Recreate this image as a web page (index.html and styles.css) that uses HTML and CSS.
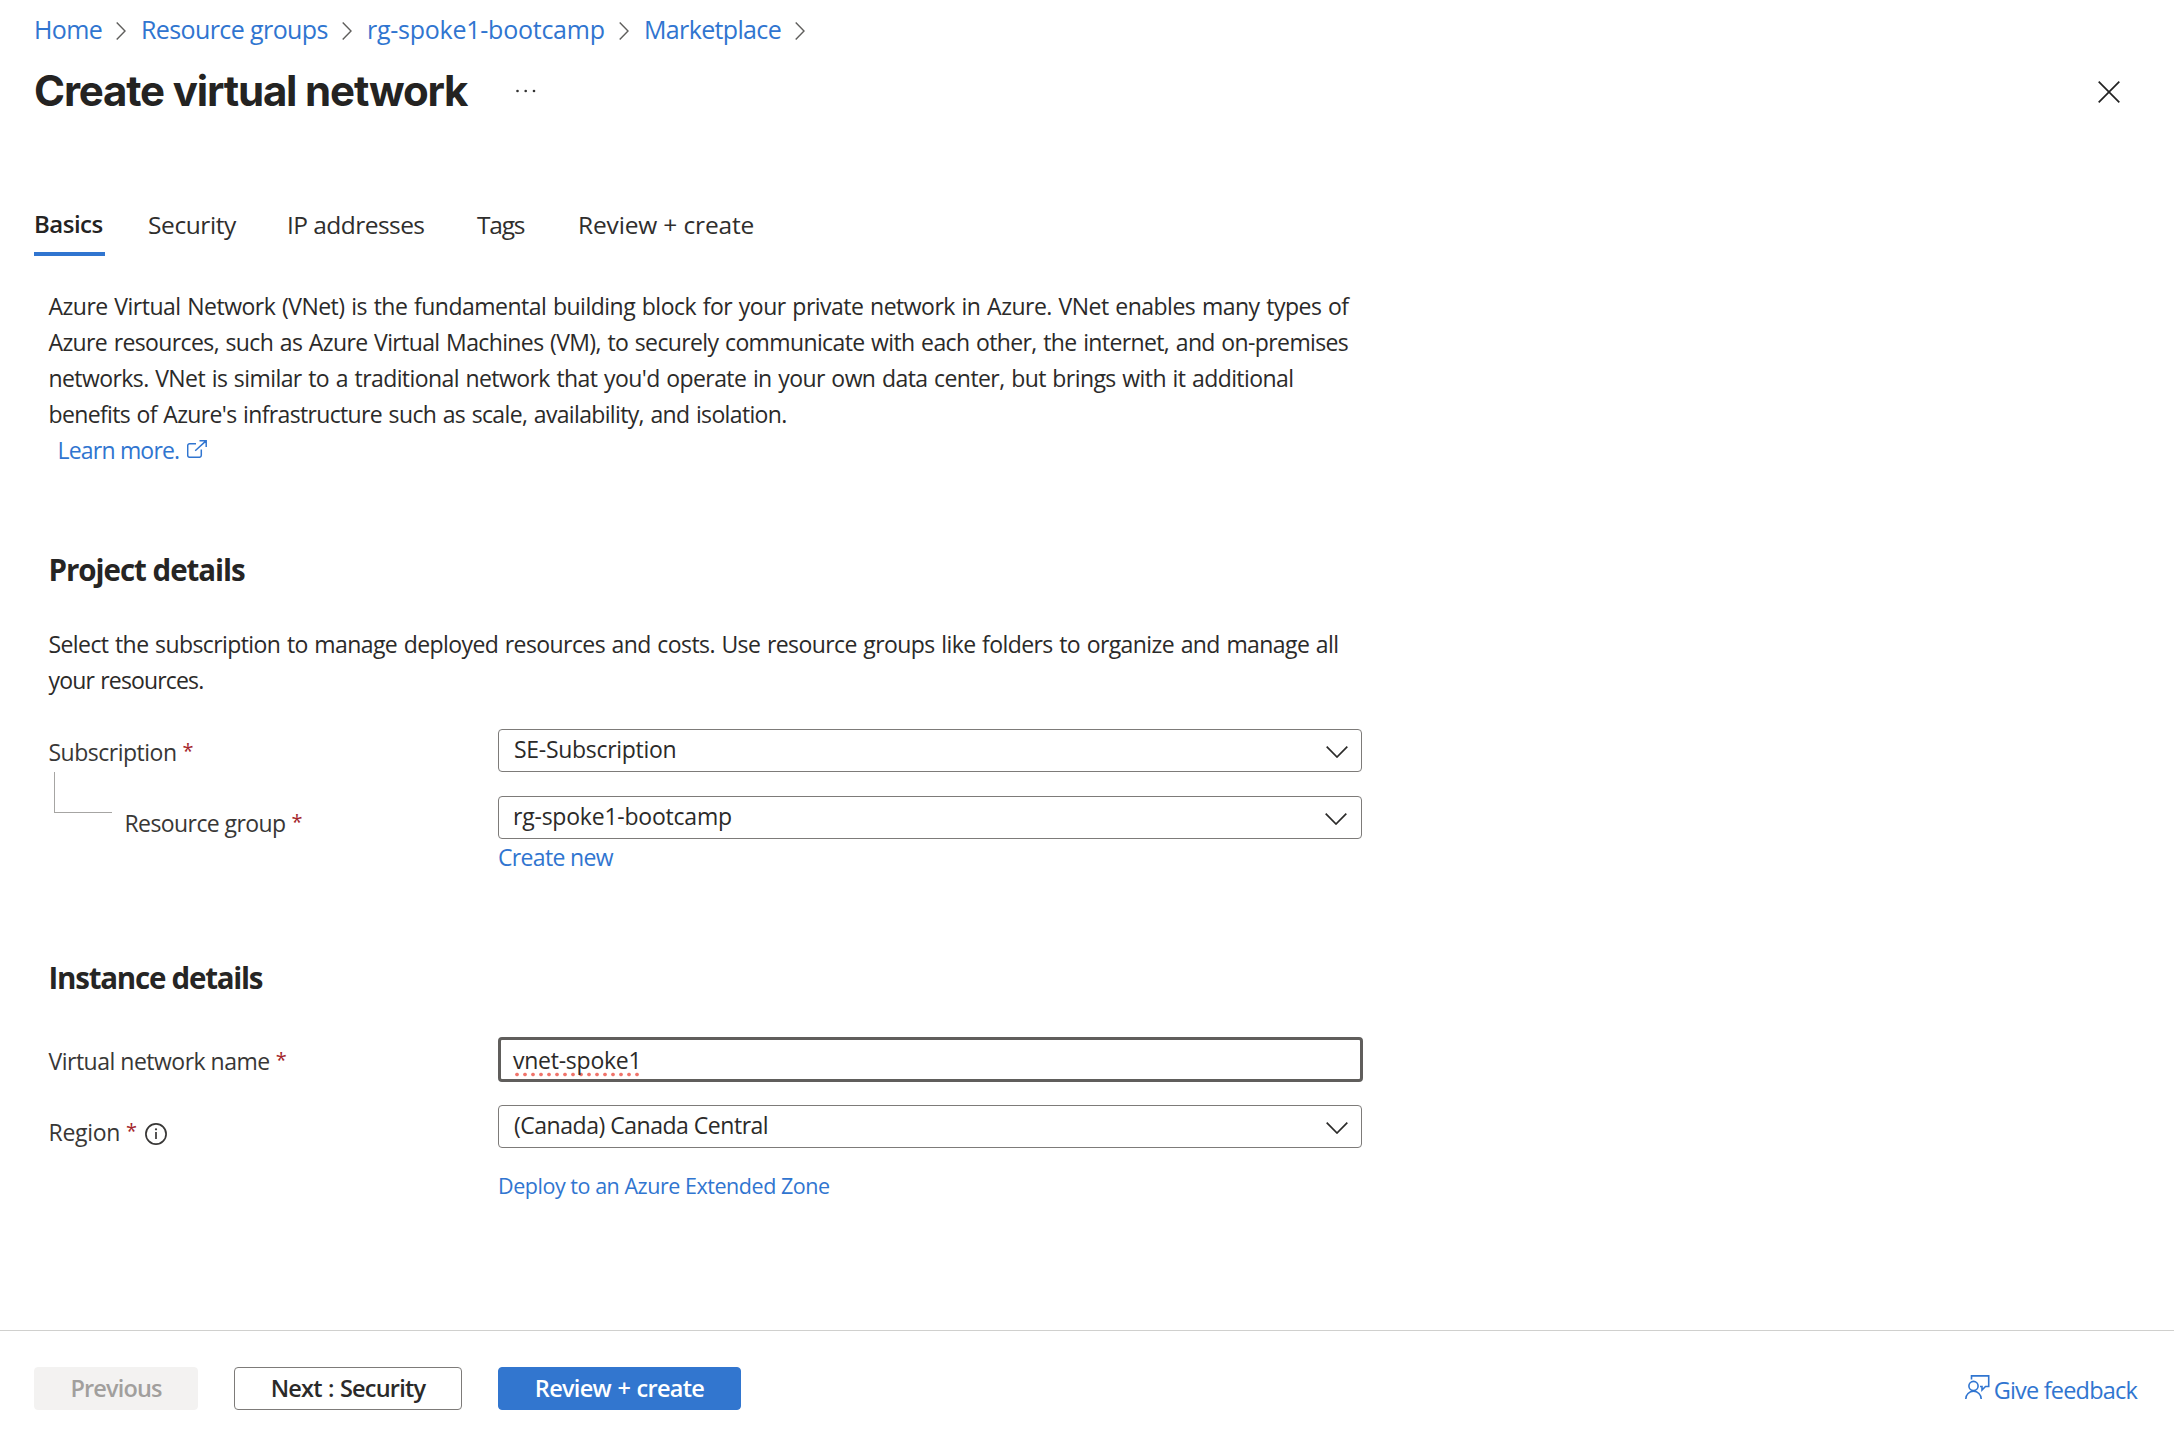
FILE: index.html
```html
<!DOCTYPE html>
<html lang="en">
<head>
<meta charset="utf-8">
<title>Create virtual network</title>
<link rel="stylesheet" href="styles.css">
</head>
<body>
<header class="header">
  <nav class="breadcrumb">
    <a class="crumb crumb-home" href="#">Home</a>
    <svg class="sep" viewBox="0 0 10 18"><path d="M.7.5 9 9 .7 17.500"/></svg>
    <a class="crumb crumb-groups" href="#">Resource groups</a>
    <svg class="sep" viewBox="0 0 10 18"><path d="M.7.5 9 9 .7 17.500"/></svg>
    <a class="crumb crumb-rg" href="#">rg-spoke1-bootcamp</a>
    <svg class="sep" viewBox="0 0 10 18"><path d="M.7.5 9 9 .7 17.500"/></svg>
    <a class="crumb crumb-market" href="#">Marketplace</a>
    <svg class="sep" viewBox="0 0 10 18"><path d="M.7.5 9 9 .7 17.500"/></svg>
  </nav>
  <div class="title-row">
    <h1 class="title">Create virtual network</h1>
    <svg class="more" viewBox="0 0 20 4"><circle cx="1.500" cy="2" r="1.300"/><circle cx="9.700" cy="2" r="1.300"/><circle cx="18" cy="2" r="1.300"/></svg>
    <svg class="close" viewBox="0 0 22 22"><path d="M.7.700 21.300 21.300M21.300.7.7 21.300"/></svg>
  </div>
</header>

<nav class="tabs">
  <a class="tab tab-active" href="#">Basics</a>
  <a class="tab tab-security" href="#">Security</a>
  <a class="tab tab-ip" href="#">IP addresses</a>
  <a class="tab tab-tags" href="#">Tags</a>
  <a class="tab tab-review" href="#">Review + create</a>
</nav>

<main class="content">
  <p class="text">
    <span class="line line-1">Azure Virtual Network (VNet) is the fundamental building block for your private network in Azure. VNet enables many types of</span>
    <span class="line line-2">Azure resources, such as Azure Virtual Machines (VM), to securely communicate with each other, the internet, and on-premises</span>
    <span class="line line-3">networks. VNet is similar to a traditional network that you'd operate in your own data center, but brings with it additional</span>
    <span class="line line-4">benefits of Azure's infrastructure such as scale, availability, and isolation.</span>
  </p>
  <a class="learn" href="#">Learn more.
    <svg class="external" viewBox="0 0 20 18"><path d="M9 3.700H2.700a2 2 0 0 0-2 2v9.600a2 2 0 0 0 2 2h9.600a2 2 0 0 0 2-2V9.500M8.200 10.700 19 .9M12.500.700H19.200V7"/></svg>
  </a>

  <h2 class="heading heading-project">Project details</h2>
  <p class="text text-project">
    <span class="line line-5">Select the subscription to manage deployed resources and costs. Use resource groups like folders to organize and manage all</span>
    <span class="line line-6">your resources.</span>
  </p>

  <div class="row row-sub">
    <div class="label"><span class="label-sub">Subscription</span><span class="star">*</span></div>
    <div class="select"><span class="value-sub">SE-Subscription</span><svg class="chevron" viewBox="0 0 22 12"><path d="M.7.7 11 11 21.300.7"/></svg></div>
  </div>
  <div class="row row-rg">
    <div class="label"><span class="tree"></span><span class="label-rg">Resource group</span><span class="star">*</span></div>
    <div class="select select-rg"><span class="value-rg">rg-spoke1-bootcamp</span><svg class="chevron" viewBox="0 0 22 12"><path d="M.7.7 11 11 21.300.7"/></svg></div>
  </div>
  <a class="below create-new" href="#">Create new</a>

  <h2 class="heading heading-instance">Instance details</h2>
  <div class="row row-name">
    <div class="label"><span class="label-name">Virtual network name</span><span class="star">*</span></div>
    <div class="input"><span class="value-name">vnet-spoke1</span></div>
  </div>
  <div class="row row-region">
    <div class="label"><span class="label-region">Region</span><span class="star">*</span>
      <svg class="info" viewBox="0 0 22 22"><circle cx="11" cy="11" r="10.100"/><path d="M11 9v7"/><circle class="dot" cx="11" cy="6.300" r="1.100"/></svg>
    </div>
    <div class="select"><span class="value-region">(Canada) Canada Central</span><svg class="chevron" viewBox="0 0 22 12"><path d="M.7.7 11 11 21.300.7"/></svg></div>
  </div>
  <a class="below deploy" href="#">Deploy to an Azure Extended Zone</a>
</main>

<footer class="footer">
  <button class="btn btn-prev">Previous</button>
  <button class="btn btn-next">Next : Security</button>
  <button class="btn btn-review">Review + create</button>
  <a class="feedback" href="#">
    <svg class="person" viewBox="0 0 25 25"><circle cx="8.500" cy="11" r="4.600"/><path d="M.8 24a7.700 7.700 0 0 1 15.400 0M6.500 4.500V.9H23.700V11.500H20.500L17 15V11.500H15"/></svg>
    <span>Give feedback</span>
  </a>
</footer>
</body>
</html>
```
FILE: styles.css
```css
* { box-sizing: border-box; }
body {
  margin: 0;
  height: 1430px;
  display: flex;
  flex-direction: column;
  overflow: hidden;
  background: #fff;
  color: #2b2a29;
  font: 400 23px/36px "Open Sans", "Noto Sans", sans-serif;
}
a { color: #3075d0; text-decoration: none; }
p, h1, h2 { margin: 0; }
svg { fill: none; stroke: currentColor; flex: none; }

.header { padding: 11px 54px 0 34px; }
.breadcrumb { display: flex; align-items: center; height: 36px; font-size: 25px; }
.crumb { white-space: nowrap; }
.crumb-home { width: 69px; letter-spacing: -.6px; }
.crumb-groups { width: 188px; letter-spacing: -.6px; }
.crumb-rg { width: 239px; letter-spacing: -.25px; }
.crumb-market { width: 138px; letter-spacing: -.65px; }
.sep { width: 10px; height: 18px; margin: 4px 15px 0 13px; color: #5f5e5c; stroke-width: 1.400; }
.title-row { display: flex; align-items: center; height: 56px; margin-top: 16px; }
.title {
  width: 482px;
  color: #242322;
  font: 650 42px/56px Inter, sans-serif;
  letter-spacing: -1.170px;
  white-space: nowrap;
}
.more { width: 20px; height: 4px; fill: #333; stroke: none; }
.close { width: 22px; height: 22px; margin: 1px 0 0 auto; color: #222; stroke-width: 1.700; }

.tabs { display: flex; height: 50px; margin-top: 87px; padding-left: 34px; font-size: 24.500px; }
.tab { color: #2f2e2d; line-height: 37px; white-space: nowrap; }
.tab-active {
  width: 71px;
  border-bottom: 4px solid #3075d0;
  color: #242322;
  font-size: 24px;
  font-weight: 600;
  line-height: 35px;
  letter-spacing: -.5px;
}
.tab-security { width: 89px; margin-left: 43px; letter-spacing: -.4px; }
.tab-ip { width: 139px; margin-left: 50px; letter-spacing: -.55px; }
.tab-tags { width: 47px; margin-left: 51px; letter-spacing: -1.200px; }
.tab-review { margin-left: 54px; letter-spacing: -.15px; }

.content { display: flex; flex-direction: column; flex: 1; padding: 32px 0 0 48.500px; }
.line { display: block; white-space: nowrap; word-spacing: 1.200px; }
.line-1 { letter-spacing: -.51px; }
.line-2 { letter-spacing: -.62px; }
.line-3 { letter-spacing: -.58px; }
.line-4 { letter-spacing: -.65px; }
.line-5 { letter-spacing: -.59px; }
.line-6 { letter-spacing: -.85px; }
.learn { display: flex; gap: 8px; margin-left: 9px; letter-spacing: -.8px; }
.external { width: 20px; height: 18px; margin-top: 8px; stroke-width: 1.500; }

.heading { color: #262524; font-size: 29.500px; font-weight: 680; line-height: 40px; }
.heading-project { margin-top: 82px; letter-spacing: -1.030px; }
.heading-instance { margin-top: 82px; letter-spacing: -1.230px; }
.text-project { margin-top: 36px; }

.row { display: flex; align-items: flex-start; height: 43px; }
.row-sub { margin-top: 31px; }
.row-rg { margin-top: 24px; }
.row-name { height: 45px; margin-top: 40px; }
.row-region { margin-top: 23px; }
.label { display: flex; width: 449.500px; padding-top: 5px; color: #383736; white-space: nowrap; }
.row-rg .label, .row-region .label { padding-top: 9px; }
.row-name .label { padding-top: 6px; }
.label-sub { letter-spacing: -.5px; }
.label-rg { margin-left: 13px; letter-spacing: -.58px; }
.label-name { letter-spacing: -.5px; }
.label-region { letter-spacing: -.3px; }
.star { margin-left: 6px; color: #a4262c; font-size: 20px; line-height: 34px; }
.tree { flex: none; width: 58px; height: 41px; margin: -33px 0 0 5px; border: solid #a6a5a3; border-width: 0 0 1px 1px; }
.info { width: 22px; height: 22px; margin: 9px 0 0 8px; stroke-width: 1.700; }
.dot { fill: currentColor; stroke: none; }

.select {
  display: flex;
  align-items: center;
  justify-content: space-between;
  width: 864px;
  height: 43px;
  padding: 0 13px 3px 15px;
  border: 1px solid #7d7b79;
  border-radius: 4px;
}
.select-rg { padding: 0 14px 3px 14px; }
.chevron { width: 22px; height: 12px; margin-top: 5px; stroke-width: 1.700; }
.value-sub { letter-spacing: -.3px; }
.value-rg { letter-spacing: -.22px; }
.value-region { letter-spacing: -.48px; }
.input {
  width: 865px;
  height: 45px;
  padding: 2px 0 0 12px;
  border: 3px solid #605e5c;
  border-radius: 4px;
}
.value-name {
  display: block;
  width: 127px;
  height: 35px;
  background: radial-gradient(circle, #f0746b 1.400px, transparent 2.200px) 0 100% / 8px 5px repeat-x;
  letter-spacing: -.25px;
  white-space: nowrap;
}
.below { align-self: flex-start; margin-left: 449.500px; }
.create-new { letter-spacing: -.65px; }
.heading-instance { padding-top: 1px; height: 40px; }
.deploy { margin-top: 20px; font-size: 21.500px; letter-spacing: -.46px; }

.footer {
  display: flex;
  align-items: flex-start;
  height: 100px;
  padding: 36px 37px 0 34px;
  border-top: 1px solid #d0d0ce;
}
.btn {
  height: 43px;
  padding: 0 0 1px;
  border: 1px solid #7d7b79;
  border-radius: 4px;
  background: #fff;
  color: #2b2a29;
  font: 540 23.500px/39px "Open Sans", sans-serif;
  word-spacing: 1px;
}
.btn-prev { width: 164px; border-color: #f3f2f1; background: #f3f2f1; color: #a19f9d; letter-spacing: -.85px; }
.btn-next { width: 228px; margin-left: 36px; letter-spacing: -.8px; }
.btn-review { width: 243px; margin-left: 36px; border-color: #3276cf; background: #3276cf; color: #fff; letter-spacing: -.7px; }
.feedback { display: flex; gap: 4px; margin-left: auto; font-size: 23.500px; letter-spacing: -.8px; }
.feedback span { padding-top: 5px; }
.person { width: 25px; height: 25px; margin-top: 8px; stroke-width: 1.600; }
```
